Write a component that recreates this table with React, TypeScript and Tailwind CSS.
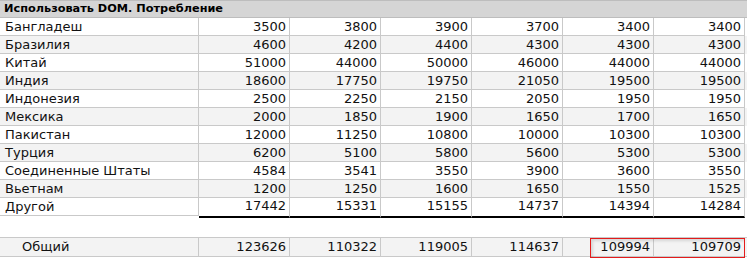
import React from "react";

const rows: [string, number[]][] = [
  ["Бангладеш", [3500, 3800, 3900, 3700, 3400, 3400]],
  ["Бразилия", [4600, 4200, 4400, 4300, 4300, 4300]],
  ["Китай", [51000, 44000, 50000, 46000, 44000, 44000]],
  ["Индия", [18600, 17750, 19750, 21050, 19500, 19500]],
  ["Индонезия", [2500, 2250, 2150, 2050, 1950, 1950]],
  ["Мексика", [2000, 1850, 1900, 1650, 1700, 1650]],
  ["Пакистан", [12000, 11250, 10800, 10000, 10300, 10300]],
  ["Турция", [6200, 5100, 5800, 5600, 5300, 5300]],
  ["Соединенные Штаты", [4584, 3541, 3550, 3900, 3600, 3550]],
  ["Вьетнам", [1200, 1250, 1600, 1650, 1550, 1525]],
  ["Другой", [17442, 15331, 15155, 14737, 14394, 14284]],
];

const totals = [123626, 110322, 119005, 114637, 109994, 109709];

export default function App() {
  return (
    <div className="relative w-[747px] h-[259px] bg-white text-[13px] text-[#111] font-['DejaVu_Sans','Verdana',sans-serif] overflow-hidden">
      <div className="h-[18px] bg-[#d5d5d5] border-t border-b border-[#bdbdbd] font-bold text-[11.3px] leading-[16px] pl-[4px] text-black">
        Использовать DOM. Потребление
      </div>
      {rows.map(([name, vals], i) => {
        const last = i === rows.length - 1;
        return (
          <div key={name} className={`flex h-[18px] ${i % 2 === 1 ? "bg-[#f3f3f3]" : "bg-white"}`}>
            <div className="w-[199px] shrink-0 border-r border-b border-[#c9c9c9] pl-[5px] leading-[17px]">
              {name}
            </div>
            {vals.map((v, j) => (
              <div
                key={j}
                className={`w-[91px] shrink-0 border-r border-[#c9c9c9] text-right pr-[3px] ${
                  last ? "border-b-2 border-b-black leading-[16px] h-[20px] bg-white" : "border-b leading-[17px]"
                }`}
              >
                {v}
              </div>
            ))}
          </div>
        );
      })}
      <div className="h-[21px]" />
      <div className="flex h-[20px] bg-[#f3f3f3] border-t border-b border-[#c9c9c9]">
        <div className="w-[199px] shrink-0 border-r border-[#c9c9c9] pl-[22px] leading-[18px]">Общий</div>
        {totals.map((v, j) => (
          <div key={j} className="w-[91px] shrink-0 border-r border-[#c9c9c9] text-right pr-[3px] leading-[18px]">
            {v}
          </div>
        ))}
      </div>
      <div className="absolute left-[590px] top-[238px] w-[155px] h-[20px] border border-[#e41b1b] shadow-[inset_2px_2px_3px_rgba(0,0,0,0.12)]" />
    </div>
  );
}
